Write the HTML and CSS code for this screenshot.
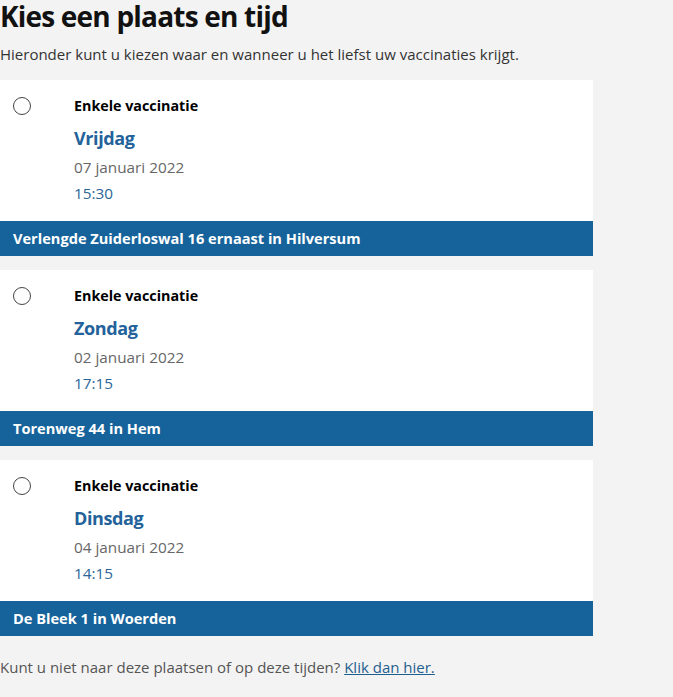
FILE: index.html
```html
<!DOCTYPE html>
<html lang="nl">
<head>
<meta charset="utf-8">
<title>Kies een plaats en tijd</title>
<link rel="stylesheet" href="styles.css">
</head>
<body>
<main class="page">
  <h1 class="title">Kies een plaats en tijd</h1>
  <p class="intro">Hieronder kunt u kiezen waar en wanneer u het liefst uw vaccinaties krijgt.</p>

  <div class="options">
    <label class="option">
      <div class="card">
        <span class="radio"></span>
        <div class="info">
          <div class="kind">Enkele vaccinatie</div>
          <div class="day">Vrijdag</div>
          <div class="date">07 januari 2022</div>
          <div class="time">15:30</div>
        </div>
      </div>
      <div class="place">Verlengde Zuiderloswal 16 ernaast in Hilversum</div>
    </label>

    <label class="option">
      <div class="card">
        <span class="radio"></span>
        <div class="info">
          <div class="kind">Enkele vaccinatie</div>
          <div class="day">Zondag</div>
          <div class="date">02 januari 2022</div>
          <div class="time">17:15</div>
        </div>
      </div>
      <div class="place">Torenweg 44 in Hem</div>
    </label>

    <label class="option">
      <div class="card">
        <span class="radio"></span>
        <div class="info">
          <div class="kind">Enkele vaccinatie</div>
          <div class="day">Dinsdag</div>
          <div class="date">04 januari 2022</div>
          <div class="time">14:15</div>
        </div>
      </div>
      <div class="place">De Bleek 1 in Woerden</div>
    </label>
  </div>

  <p class="footer">Kunt u niet naar deze plaatsen of op deze tijden? <a class="link" href="#">Klik dan hier.</a></p>
</main>
</body>
</html>
```

FILE: styles.css
```css
html, body {
  margin: 0;
  padding: 0;
  background: #f3f3f3;
}

body {
  font-family: "Open Sans", "Noto Sans", sans-serif;
  color: #222;
}

.page {
  width: 593px;
}

.title {
  margin: 0;
  font-size: 28px;
  line-height: 32px;
  font-weight: 700;
  color: #111;
  letter-spacing: -0.8px;
}

.intro {
  margin: 12px 0 0 0;
  font-size: 15px;
  line-height: 20px;
  color: #333;
}

.options {
  display: flex;
  flex-direction: column;
  gap: 14px;
  margin-top: 16px;
}

.option {
  display: block;
}

.card {
  background: #fff;
  display: flex;
  gap: 43px;
  padding: 16px 13px 15px 13px;
}

.radio {
  flex: none;
  width: 16px;
  height: 16px;
  border: 1px solid #444;
  border-radius: 50%;
  margin-top: 1px;
}

.info {
  display: flex;
  flex-direction: column;
}

.kind {
  font-size: 14.3px;
  line-height: 20px;
  font-weight: 700;
  color: #000;
}

.day {
  margin-top: 8px;
  font-size: 18px;
  line-height: 28px;
  font-weight: 700;
  color: #23629a;
  letter-spacing: -0.4px;
}

.date {
  margin-top: 2px;
  font-size: 15.3px;
  line-height: 26px;
  color: #666;
}

.time {
  font-size: 15.3px;
  line-height: 26px;
  color: #2a6598;
}

.place {
  background: #16639b;
  color: #fff;
  font-size: 14.6px;
  font-weight: 700;
  line-height: 35px;
  padding: 0 13px;
}

.footer {
  margin: 20px 0 0 0;
  font-size: 15px;
  line-height: 22px;
  color: #555;
}

.link {
  color: #1f5f8f;
  text-decoration: underline;
}
```
